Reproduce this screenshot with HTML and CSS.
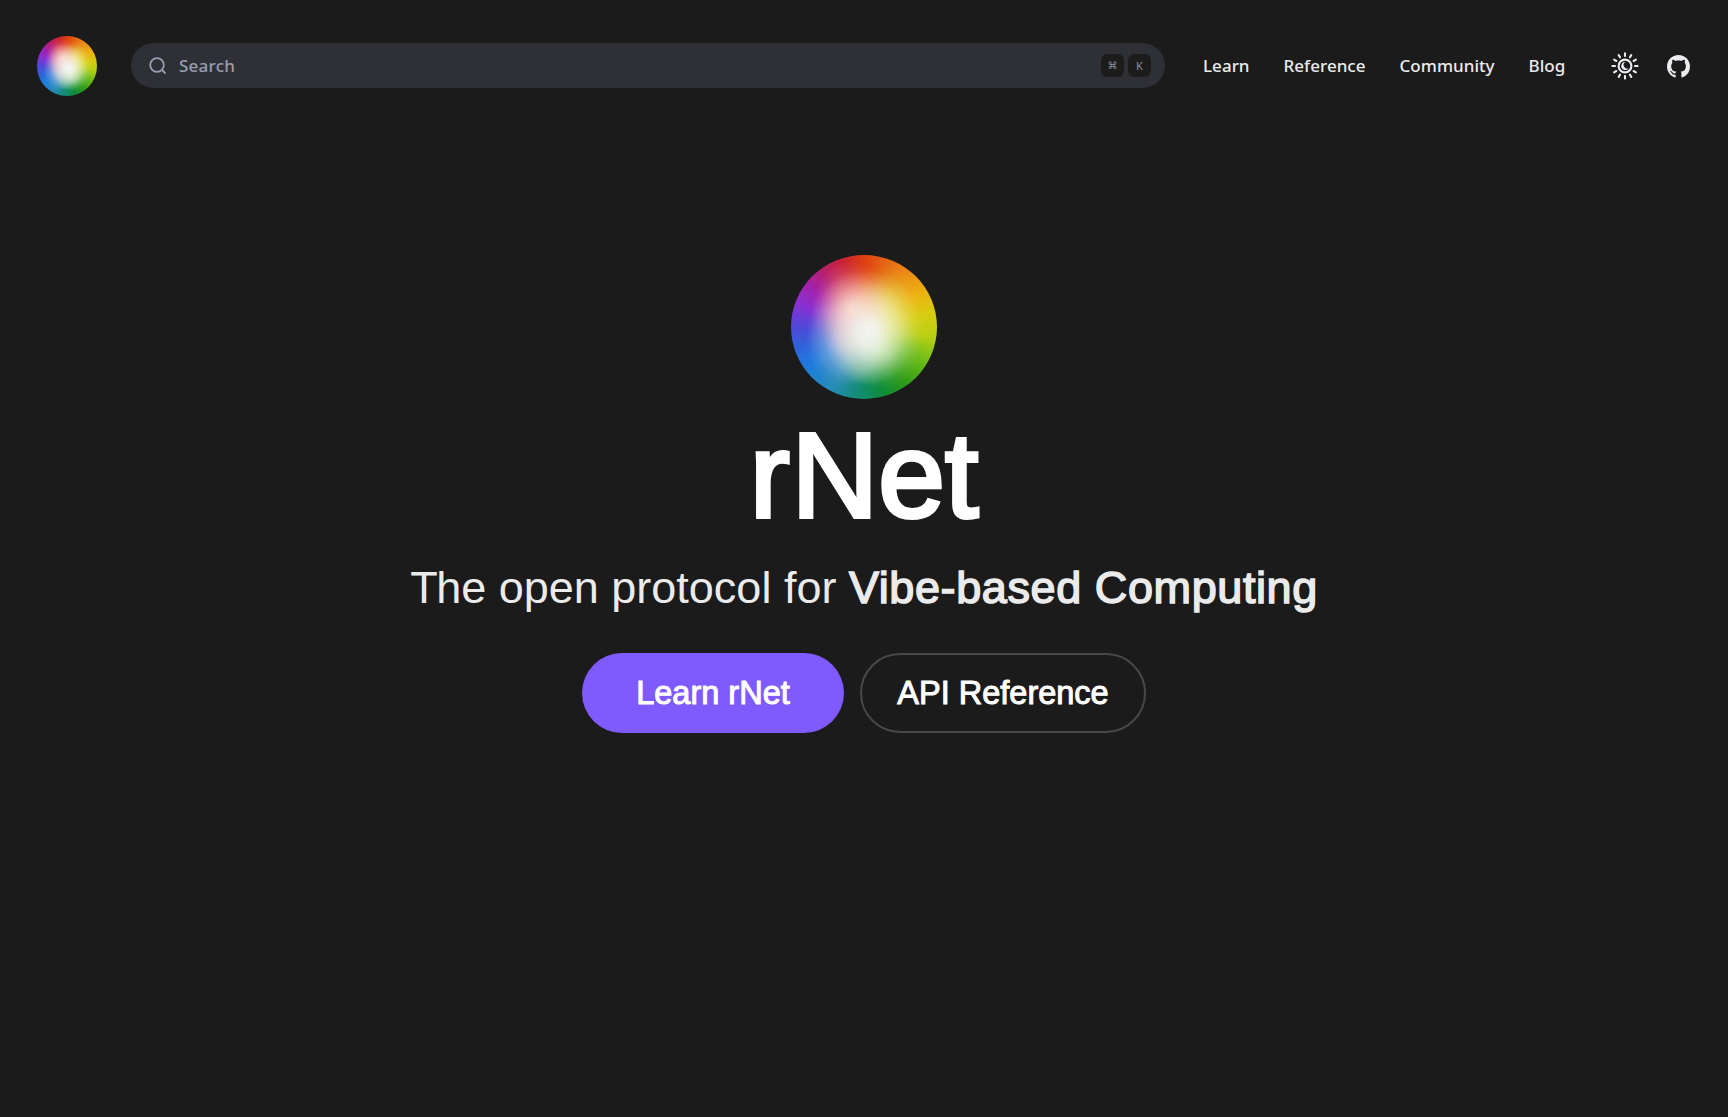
FILE: index.html
```html
<!DOCTYPE html>
<html lang="en">
<head>
<meta charset="utf-8">
<title>rNet</title>
<link rel="stylesheet" href="styles.css">
</head>
<body>
<header class="topbar">
  <a class="orb orb-small" href="#" aria-label="Home"></a>
  <button class="search" type="button">
    <svg class="search-icon" viewBox="0 0 18 18"><circle cx="8" cy="8" r="6.8"/><path d="M13 13l3.6 3.6"/></svg>
    <span class="search-label">Search</span>
    <kbd class="key">⌘</kbd><kbd class="key key-letter">K</kbd>
  </button>
  <nav class="links">
    <a href="#">Learn</a><a href="#">Reference</a><a href="#">Community</a><a href="#">Blog</a>
  </nav>
  <div class="tools">
    <svg class="sun" viewBox="-14 -14 28 28">
      <circle r="6.4"/>
      <path class="moon" d="M.6-4A4 4 0 1 0 3.6 2.2A3.3 3.3 0 0 1 .6-4Z"/>
      <path d="M0-10v-2.6M0 10v2.6M-10 0h-2.6M10 0h2.6M5-8.66l1.3-2.25M8.66-5l2.25-1.3M8.66 5l2.25 1.3M5 8.66l1.3 2.25M-5 8.66l-1.3 2.25M-8.66 5l-2.25 1.3M-8.66-5l-2.25-1.3M-5-8.66l-1.3-2.25"/>
    </svg>
    <svg class="github" viewBox="0 0 16 16"><path d="M8 0C3.58 0 0 3.58 0 8c0 3.54 2.29 6.53 5.47 7.59.4.07.55-.17.55-.38 0-.19-.01-.82-.01-1.49-2.01.37-2.53-.49-2.69-.94-.09-.23-.48-.94-.82-1.13-.28-.15-.68-.52-.01-.53.63-.01 1.08.58 1.23.82.72 1.21 1.87.87 2.33.66.07-.52.28-.87.51-1.07-1.78-.2-3.64-.89-3.64-3.95 0-.87.31-1.59.82-2.15-.08-.2-.36-1.02.08-2.12 0 0 .67-.21 2.2.82.64-.18 1.32-.27 2-.27s1.36.09 2 .27c1.53-1.04 2.2-.82 2.2-.82.44 1.1.16 1.92.08 2.12.51.56.82 1.27.82 2.15 0 3.07-1.87 3.75-3.65 3.95.29.25.54.73.54 1.48 0 1.07-.01 1.93-.01 2.2 0 .21.15.46.55.38A8.01 8.01 0 0 0 16 8c0-4.42-3.58-8-8-8Z"/></svg>
  </div>
</header>
<main class="hero">
  <div class="orb orb-large"></div>
  <h1 class="title"><span class="loose">r</span>Net</h1>
  <p class="tagline"><span class="tight">T</span>he open protocol for <strong>Vibe-based Computing</strong></p>
  <div class="actions">
    <a class="button primary" href="#">Learn rNet</a>
    <a class="button outline" href="#">API Reference</a>
  </div>
</main>
</body>
</html>
```
FILE: styles.css
```css
* { box-sizing: border-box; }
body {
  margin: 0;
  min-height: 100vh;
  background: #1b1b1b;
  color: #ebebeb;
  font-family: "Liberation Sans", Arial, sans-serif;
}
a { color: inherit; text-decoration: none; }
.topbar {
  display: flex;
  align-items: center;
  height: 132px;
  padding: 0 38px 0 37px;
  font-family: "Noto Sans", sans-serif;
}
.orb {
  flex: none;
  border-radius: 50%;
  background:
    radial-gradient(ellipse 31% 36% at 53% 54%, #f2f5f2 0%, rgba(244,245,240,.85) 25%, rgba(245,245,238,.45) 55%, rgba(245,245,238,.12) 82%, rgba(245,245,238,0) 100%),
    radial-gradient(ellipse 28% 34% at 42% 38%, rgba(255,208,192,.95) 0%, rgba(255,195,178,.55) 45%, rgba(250,185,170,.14) 80%, rgba(250,180,165,0) 100%),
    radial-gradient(ellipse 26% 32% at 65% 39%, rgba(232,228,100,.9) 0%, rgba(228,222,80,.5) 45%, rgba(226,220,50,.12) 80%, rgba(226,220,50,0) 100%),
    radial-gradient(ellipse 30% 28% at 60% 65%, rgba(180,228,160,.75) 0%, rgba(160,215,140,.32) 50%, rgba(140,210,130,0) 100%),
    radial-gradient(ellipse 28% 32% at 38% 60%, rgba(195,190,230,.8) 0%, rgba(170,185,225,.34) 50%, rgba(140,180,220,0) 100%),
    radial-gradient(ellipse 40% 40% at 51% 51%, rgba(235,235,225,.6) 0%, rgba(235,235,225,.32) 50%, rgba(235,235,225,0) 100%),
    conic-gradient(#de4012 0deg, #ea7c16 30deg, #eeae10 58deg, #d8cc10 78deg, #b8d014 98deg, #72be18 118deg, #2e9c16 143deg, #108c38 163deg, #128c6c 182deg, #268cb8 208deg, #1e7cdc 235deg, #3062da 253deg, #5048d8 270deg, #8a30d2 290deg, #a420a8 308deg, #bc2060 328deg, #cc2430 344deg, #de4012 360deg);
}
.orb-small { width: 60px; height: 60px; }
.orb-large { width: 146px; height: 144px; }
.search {
  display: flex;
  align-items: center;
  width: 1034px;
  height: 45px;
  margin: 0 0 1px 34px;
  padding: 0 14px 0 18px;
  border: 0;
  border-radius: 23px;
  background: #2f3036;
  color: #999eb0;
  font: 500 17px "Noto Sans", sans-serif;
}
.search-icon { width: 18px; height: 18px; fill: none; stroke: #999eb0; stroke-width: 1.8; }
.search-label { margin: 0 auto 0 12px; letter-spacing: .25px; }
.key {
  display: grid;
  place-items: center;
  width: 23px;
  height: 23px;
  margin-left: 4px;
  border-radius: 6px;
  background: #1c1c1d;
  color: #8c909f;
  font: 10px "DejaVu Sans", sans-serif;
}
.key-letter { font: 11px "Noto Sans", sans-serif; }
.links {
  display: flex;
  gap: 34px;
  margin-left: 38px;
  padding-bottom: 2px;
  font-size: 17px;
  font-weight: 500;
  letter-spacing: .03px;
}
.tools { display: flex; align-items: center; gap: 28px; margin-left: auto; }
.sun { width: 28px; height: 28px; fill: none; stroke: #ebecf0; stroke-width: 2.1; stroke-linecap: round; }
.sun .moon { fill: #ebecf0; stroke: none; }
.github { width: 23px; height: 23px; fill: #ebecf0; }
.hero { display: flex; flex-direction: column; align-items: center; padding-top: 123px; }
.title {
  margin: 4px 0 0;
  color: #fff;
  font-size: 120px;
  font-weight: 400;
  line-height: 144px;
  -webkit-text-stroke: 4px #fff;
}
.title .loose { letter-spacing: 2px; }
.tagline { margin: 11px 0 0; font-size: 45px; line-height: 60px; letter-spacing: 0; white-space: nowrap; }
.tagline .tight { letter-spacing: -1.5px; }
.tagline strong { font-weight: 400; letter-spacing: .6px; -webkit-text-stroke: 1.5px #ebebeb; }
.actions { display: flex; gap: 16px; margin-top: 35px; }
.button {
  display: grid;
  place-items: center;
  height: 80px;
  border-radius: 40px;
  color: #fff;
  font-size: 32.5px;
  -webkit-text-stroke: 1px #fff;
}
.primary { width: 262px; background: #7f5aff; }
.outline { width: 286px; border: 2px solid #484848; }
```
